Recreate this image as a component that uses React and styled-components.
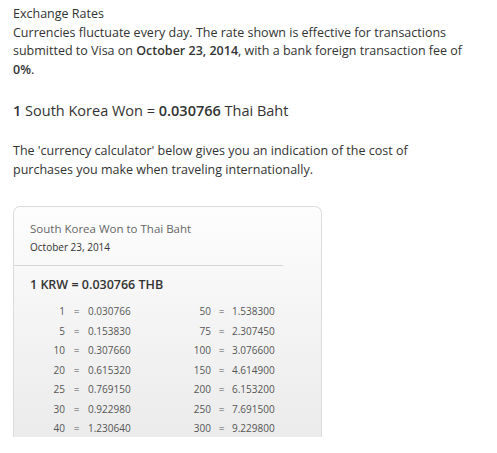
import styled, {createGlobalStyle} from "styled-components"

const Global = createGlobalStyle`
    body {
        margin: 0;
        background: #fff;
        font-family: "Open Sans", "Noto Sans", sans-serif;
        color: #333;
    }
`

const Page = styled.div`
    padding: 5px 13px 0 13px;
    height: 453px;
    box-sizing: border-box;
    overflow: hidden;
`

const Text = styled.p`
    margin: 0;
    font-size: 12.5px;
    line-height: 18.5px;

    b {
        font-weight: 600;
    }
`

const Heading = styled.h2`
    margin: 22px 0 21px 0;
    font-size: 14.5px;
    font-weight: normal;
    line-height: 20px;

    b {
        font-weight: 600;
    }
`

const Card = styled.div`
    margin-top: 27px;
    width: 309px;
    height: 231px;
    overflow: hidden;
    border: 1px solid #dcdcdc;
    border-bottom: none;
    border-radius: 7px 7px 0 0;
    background: linear-gradient(#fdfdfd, #ebebeb);
    box-sizing: border-box;
`

const CardHead = styled.div`
    padding: 12px 0 9px 16px;
    border-bottom: 1px solid #d6d6d6;
    margin-right: 38px;
`

const CardTitle = styled.div`
    font-size: 11.5px;
    color: #666;
    line-height: 19px;
`

const CardDate = styled.div`
    font-size: 10px;
    line-height: 18px;
`

const Rate = styled.div`
    padding: 9px 0 7px 16px;
    font-size: 12.5px;
    font-weight: 600;
    line-height: 20px;
`

const Grid = styled.div`
    display: grid;
    grid-template-columns: 137px 130px;
`

const Row = styled.div`
    display: grid;
    grid-template-columns: ${p => p.$w}px ${p => p.$eq}px auto;
    font-size: 10px;
    line-height: 19.5px;
    color: #555;
`

const Num = styled.span`
    text-align: right;
`

const Eq = styled.span`
    text-align: center;
`

const left = [
    ["1", "0.030766"], ["5", "0.153830"], ["10", "0.307660"], ["20", "0.615320"],
    ["25", "0.769150"], ["30", "0.922980"], ["40", "1.230640"],
]
const right = [
    ["50", "1.538300"], ["75", "2.307450"], ["100", "3.076600"], ["150", "4.614900"],
    ["200", "6.153200"], ["250", "7.691500"], ["300", "9.229800"],
]

export default function App() {
    return (
        <Page>
            <Global/>
            <Text>Exchange Rates</Text>
            <Text>
                Currencies fluctuate every day. The rate shown is effective for transactions
                submitted to Visa on <b>October 23, 2014</b>, with a bank foreign transaction fee of <b>0%</b>.
            </Text>
            <Heading><b>1</b> South Korea Won = <b>0.030766</b> Thai Baht</Heading>
            <Text>
                The 'currency calculator' below gives you an indication of the cost of<br/>
                purchases you make when traveling internationally.
            </Text>
            <Card>
                <CardHead>
                    <CardTitle>South Korea Won to Thai Baht</CardTitle>
                    <CardDate>October 23, 2014</CardDate>
                </CardHead>
                <Rate>1 KRW = 0.030766 THB</Rate>
                <Grid>
                    {left.map((l, i) => (
                        <>
                            <Row key={"l" + i} $w={51} $eq={23}>
                                <Num>{l[0]}</Num><Eq>=</Eq><span>{l[1]}</span>
                            </Row>
                            <Row key={"r" + i} $w={60} $eq={21}>
                                <Num>{right[i][0]}</Num><Eq>=</Eq><span>{right[i][1]}</span>
                            </Row>
                        </>
                    ))}
                </Grid>
            </Card>
        </Page>
    );
}
